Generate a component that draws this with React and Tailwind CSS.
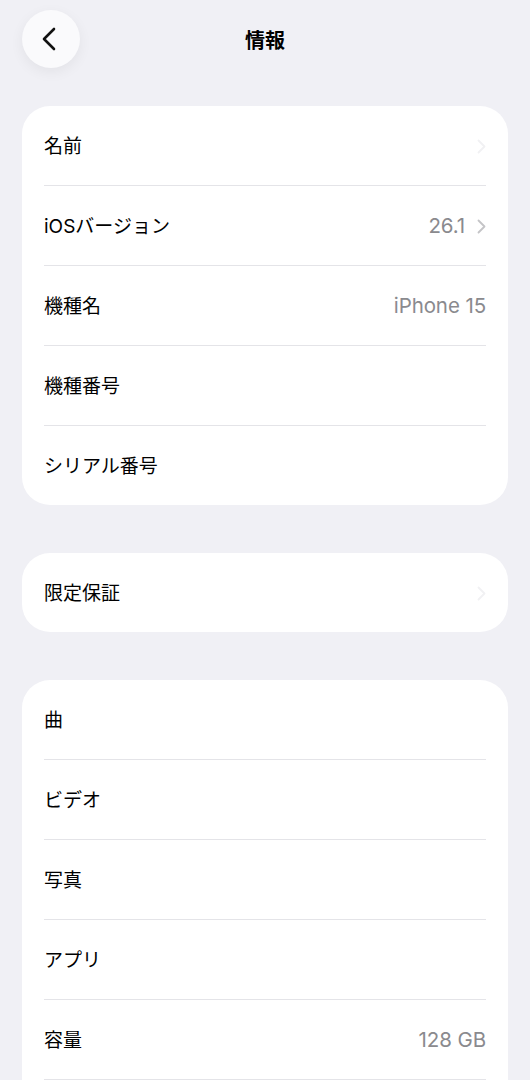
import React from "react";

const font = { fontFamily: 'Inter, "Noto Sans CJK JP", "Noto Sans", sans-serif' };

function Chevron({ className }) {
  return (
    <svg width="9" height="15" viewBox="0 0 9 15" fill="none" className={className}>
      <path d="M1.5 1.5L7.5 7.5L1.5 13.5" stroke="currentColor" strokeWidth="1.8" strokeLinecap="round" strokeLinejoin="round" />
    </svg>
  );
}

function Row({ label, value, chevron, faint, last }) {
  return (
    <>
      <div className="h-[79px] flex items-center justify-between px-[22px]">
        <span className="text-[19px] text-black pt-[4px]">{label}</span>
        <div className="flex items-center gap-[12px] pt-[2px]">
          {value && <span className="text-[20.5px] text-[#8a8a8e] tracking-[-0.1px]">{value}</span>}
          {chevron && <Chevron className={faint ? "text-[#f1f1f3]" : "text-[#c4c4c7]"} />}
        </div>
      </div>
      {!last && <div className="h-px bg-[#e4e4e8] mx-[22px]"></div>}
    </>
  );
}

function Card({ rows, open }) {
  return (
    <div className={open ? "bg-white rounded-[28px] overflow-hidden pb-[60px]" : "bg-white rounded-[28px] overflow-hidden"}>
      {rows.map((r, i) => (
        <Row key={r.label} {...r} last={!open && i === rows.length - 1} />
      ))}
    </div>
  );
}

export default function App() {
  return (
    <div className="w-[530px] h-[1080px] overflow-hidden bg-[#f0f0f5]" style={font}>
      <div className="relative h-[106px]">
        <button className="absolute left-[22px] top-[10px] w-[58px] h-[58px] rounded-full bg-[#fafafc] shadow-[0_4px_14px_rgba(0,0,0,0.06)] flex items-center justify-center">
          <svg width="16" height="24" viewBox="0 0 16 24" fill="none" className="-ml-[4px]">
            <path d="M13 2L3 12L13 22" stroke="#111" strokeWidth="2.6" strokeLinecap="round" strokeLinejoin="round" />
          </svg>
        </button>
        <div className="pt-[27px] text-center text-[20px] font-bold text-black leading-[28px]">情報</div>
      </div>

      <div className="flex flex-col gap-12 px-[22px]">
        <Card
          rows={[
            { label: "名前", chevron: true, faint: true },
            { label: "iOSバージョン", value: "26.1", chevron: true },
            { label: "機種名", value: "iPhone 15" },
            { label: "機種番号" },
            { label: "シリアル番号" },
          ]}
        />
        <Card rows={[{ label: "限定保証", chevron: true, faint: true }]} />
        <Card
          open
          rows={[
            { label: "曲" },
            { label: "ビデオ" },
            { label: "写真" },
            { label: "アプリ" },
            { label: "容量", value: "128 GB" },
          ]}
        />
      </div>
    </div>
  );
}
